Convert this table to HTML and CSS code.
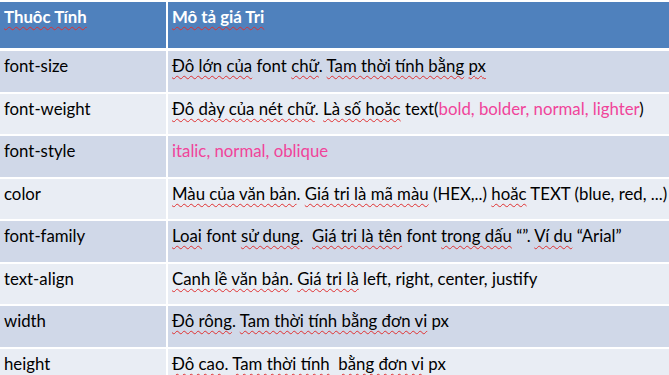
FILE: index.html
```html
<!DOCTYPE html>
<html lang="vi">
<head>
<meta charset="utf-8">
<link rel="stylesheet" href="styles.css">
</head>
<body>
<div class="grid">
  <div class="cell head"><span class="sp">Thuôc Tính</span></div>
  <div class="cell head"><span class="sp">Mô tả giá Tri</span></div>

  <div class="cell odd">font-size</div>
  <div class="cell odd"><span class="sp">Đô lớn của</span> font <span class="sp">chữ</span>. <span class="sp">Tam thời tính bằng</span> <span class="sp">px</span></div>

  <div class="cell even">font-weight</div>
  <div class="cell even"><span class="sp">Đô dày của nét chữ</span>. <span class="sp">Là số hoăc</span> text(<span class="pink">bold, bolder, normal, lighter</span>)</div>

  <div class="cell odd">font-style</div>
  <div class="cell odd"><span class="pink">italic, normal, oblique</span></div>

  <div class="cell even">color</div>
  <div class="cell even"><span class="sp">Màu của văn bản</span>. <span class="sp">Giá tri là mã màu</span> (HEX,..) <span class="sp">hoăc</span> TEXT (blue, red, ...)</div>

  <div class="cell odd">font-family</div>
  <div class="cell odd"><span class="sp">Loai</span> font <span class="sp">sử dung</span>.&nbsp; <span class="sp">Giá tri là tên</span> font <span class="sp">trong dấu</span> “”. <span class="sp">Ví du</span> “Arial”</div>

  <div class="cell even">text-align</div>
  <div class="cell even"><span class="sp">Canh lề văn bản</span>. <span class="sp">Giá tri là</span> left, right, center, justify</div>

  <div class="cell odd">width</div>
  <div class="cell odd"><span class="sp">Đô rông</span>. <span class="sp">Tam thời tính bằng đơn vi</span> px</div>

  <div class="cell even">height</div>
  <div class="cell even"><span class="sp">Đô cao</span>. <span class="sp">Tam thời tính</span>&nbsp; <span class="sp">bằng đơn vi</span> px</div>
</div>
</body>
</html>
```

FILE: styles.css
```css
html, body {
  margin: 0;
  padding: 0;
  background: #ffffff;
}
body {
  padding-top: 2px;
  font-family: Lato, "Liberation Sans", sans-serif;
  font-size: 16.8px;
  color: #000000;
  overflow: hidden;
}
.grid {
  display: grid;
  grid-template-columns: 166px 1fr;
  grid-template-rows: 47px repeat(8, 40.5px);
  column-gap: 2px;
  row-gap: 2px;
  width: 669px;
}
.cell {
  padding: 4px 0 0 4px;
  line-height: 22px;
  white-space: nowrap;
  overflow: hidden;
}
.head {
  background: #4f81bd;
  color: #ffffff;
  font-weight: bold;
  margin-bottom: 1px;
}
.odd { background: #d0d8e8; }
.even { background: #e9edf4; }
.pink { color: #f0449a; }
.sp {
  text-decoration: underline wavy #e03030;
  text-decoration-thickness: 1px;
  text-underline-offset: 3px;
  text-decoration-skip-ink: none;
}
```
